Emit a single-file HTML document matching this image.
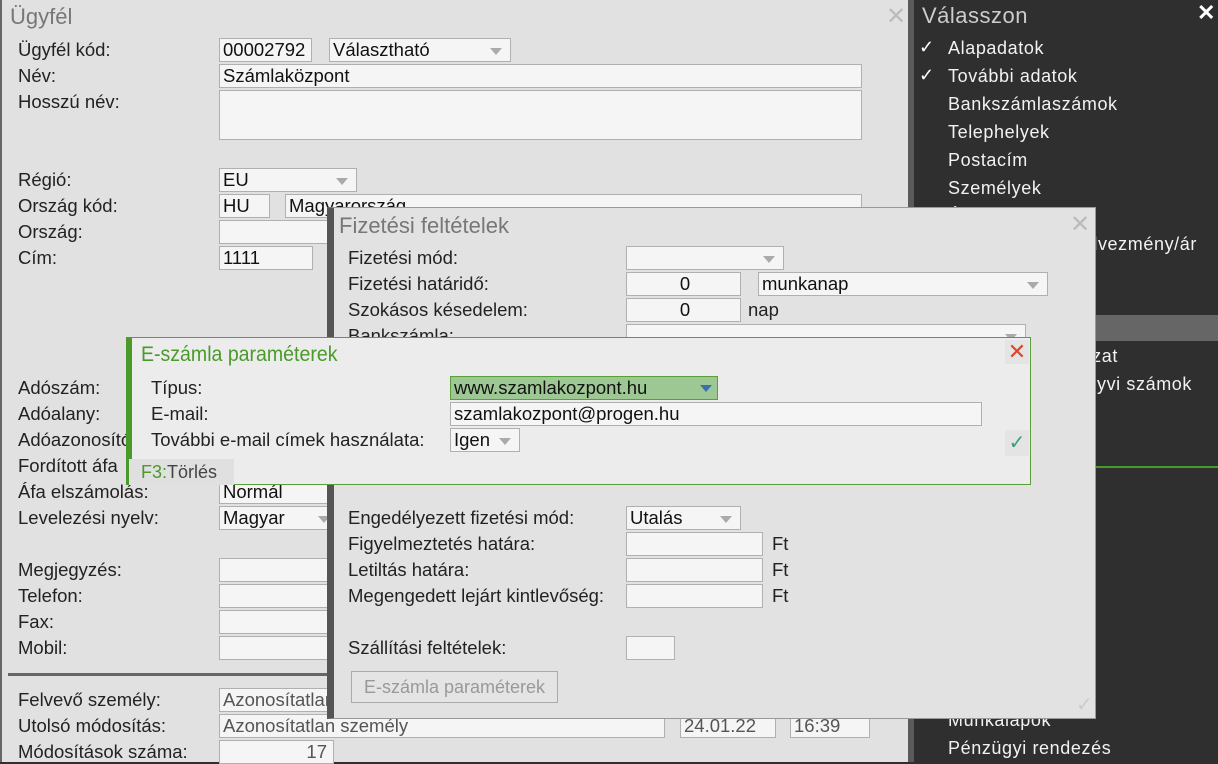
<!DOCTYPE html>
<html><head><meta charset="utf-8"><style>
*{box-sizing:border-box;margin:0;padding:0}
body{width:1218px;height:762px;overflow:hidden;background:#2f2f2f;font-family:"Liberation Sans",sans-serif;position:relative}
.a{position:absolute;white-space:nowrap}
#main{position:absolute;left:0;top:0;width:908px;height:762px;background:#e1e1e1;border-left:2px solid #666}
.l{position:absolute;font-size:18.5px;color:#222;line-height:20px;white-space:nowrap}
.i{position:absolute;height:24px;background:#f5f5f5;border:1px solid #b0b0b0;font-size:18.5px;line-height:22px;padding-left:3px;color:#111;white-space:nowrap;overflow:hidden}
.dd::after{content:"";position:absolute;right:8px;top:9px;border-left:6px solid transparent;border-right:6px solid transparent;border-top:7px solid #aaa}
.m{position:absolute;left:34px;font-size:18px;color:#f2f2f2;letter-spacing:.6px;line-height:22px;white-space:nowrap}
.mr{position:absolute;font-size:18px;color:#f2f2f2;letter-spacing:.6px;line-height:22px;white-space:nowrap;text-align:right}
</style></head><body>
<div id="main">
<div class="a" style="left:8px;top:4px;font-size:22px;color:#777">Ügyfél</div>
<div class="a" style="left:884px;top:2px;font-size:24px;color:#bbb">✕</div>
<div class="l" style="left:16px;top:40px">Ügyfél kód:</div>
<div class="l" style="left:16px;top:66px">Név:</div>
<div class="l" style="left:16px;top:92px">Hosszú név:</div>
<div class="l" style="left:16px;top:170px">Régió:</div>
<div class="l" style="left:16px;top:196px">Ország kód:</div>
<div class="l" style="left:16px;top:222px">Ország:</div>
<div class="l" style="left:16px;top:248px">Cím:</div>
<div class="l" style="left:16px;top:378px">Adószám:</div>
<div class="l" style="left:16px;top:404px">Adóalany:</div>
<div class="l" style="left:16px;top:430px">Adóazonosító</div>
<div class="l" style="left:16px;top:456px">Fordított áfa</div>
<div class="l" style="left:16px;top:482px">Áfa elszámolás:</div>
<div class="l" style="left:16px;top:508px">Levelezési nyelv:</div>
<div class="l" style="left:16px;top:560px">Megjegyzés:</div>
<div class="l" style="left:16px;top:586px">Telefon:</div>
<div class="l" style="left:16px;top:612px">Fax:</div>
<div class="l" style="left:16px;top:638px">Mobil:</div>
<div class="a" style="left:6px;top:673px;width:900px;height:3px;background:#666"></div>
<div class="l" style="left:16px;top:690px">Felvevő személy:</div>
<div class="l" style="left:16px;top:716px">Utolsó módosítás:</div>
<div class="l" style="left:16px;top:742px">Módosítások száma:</div>
<div class="i" style="left:217px;top:38px;width:93px">00002792</div>
<div class="i dd" style="left:327px;top:38px;width:182px">Választható</div>
<div class="i" style="left:217px;top:64px;width:643px">Számlaközpont</div>
<div class="i" style="left:217px;top:90px;width:643px;height:50px"></div>
<div class="i dd" style="left:217px;top:168px;width:138px">EU</div>
<div class="i" style="left:217px;top:194px;width:51px">HU</div>
<div class="i" style="left:283px;top:194px;width:577px">Magyarország</div>
<div class="i" style="left:217px;top:220px;width:200px"></div>
<div class="i" style="left:217px;top:246px;width:94px">1111</div>
<div class="i" style="left:217px;top:480px;width:120px">Normál</div>
<div class="i dd" style="left:217px;top:506px;width:120px">Magyar</div>
<div class="i" style="left:217px;top:558px;width:120px"></div>
<div class="i" style="left:217px;top:584px;width:120px"></div>
<div class="i" style="left:217px;top:610px;width:120px"></div>
<div class="i" style="left:217px;top:636px;width:120px"></div>
<div class="i" style="left:217px;top:688px;width:200px;color:#555">Azonosítatlan</div>
<div class="i" style="left:217px;top:714px;width:446px;color:#555">Azonosítatlan személy</div>
<div class="i" style="left:678px;top:714px;width:96px;color:#555">24.01.22</div>
<div class="i" style="left:788px;top:714px;width:80px;color:#555">16:39</div>
<div class="i" style="left:217px;top:740px;width:115px;text-align:right;padding-right:6px;color:#555">17</div>
</div>
<div class="a" style="left:908px;top:0;width:6px;height:762px;background:#5a5a5a"></div>
<!-- right panel -->
<div class="a" style="left:914px;top:0;width:304px;height:762px;background:#2f2f2f">
<div class="a" style="left:8px;top:3px;font-size:22px;color:#ccc;letter-spacing:.5px">Válasszon</div>
<div class="a" style="left:283px;top:0px;font-size:22px;color:#fff;font-weight:bold">✕</div>
<div class="a" style="left:0;top:315px;width:304px;height:26px;background:#666"></div>
<div class="a" style="left:5px;top:37px;font-size:18px;color:#fff">✓</div>
<div class="a" style="left:5px;top:65px;font-size:18px;color:#fff">✓</div>
<div class="m" style="top:37px">Alapadatok</div>
<div class="m" style="top:65px">További adatok</div>
<div class="m" style="top:93px">Bankszámlaszámok</div>
<div class="m" style="top:121px">Telephelyek</div>
<div class="m" style="top:149px">Postacím</div>
<div class="m" style="top:177px">Személyek</div>
<div class="m" style="top:205px">Árak</div>
<div class="mr" style="right:21px;top:233px">Mennyiségi kedvezmény/ár</div>
<div class="mr" style="right:100px;top:345px">Árengedmény/zat</div>
<div class="mr" style="right:26px;top:373px">Főkönyvi számok</div>
<div class="a" style="left:180px;top:466px;width:124px;height:2px;background:#4a9a2a"></div>
<div class="m" style="top:709px">Munkalapok</div>
<div class="m" style="top:737px">Pénzügyi rendezés</div>
</div>
<!-- Fizetési -->
<div class="a" style="left:327px;top:207px;width:769px;height:512px;background:#e2e2e2;border:1px solid #999;border-left:7px solid #555">
<div class="a" style="left:5px;top:5px;font-size:22px;color:#777">Fizetési feltételek</div>
<div class="a" style="left:736px;top:2px;font-size:24px;color:#bbb">✕</div>
<div class="a" style="left:742px;top:484px;font-size:20px;color:#ccc">✓</div>
</div>
<div class="l" style="left:348px;top:248px">Fizetési mód:</div>
<div class="l" style="left:348px;top:274px">Fizetési határidő:</div>
<div class="l" style="left:348px;top:300px">Szokásos késedelem:</div>
<div class="l" style="left:348px;top:326px">Bankszámla:</div>
<div class="i dd" style="left:626px;top:246px;width:158px"></div>
<div class="i" style="left:626px;top:272px;width:115px;text-align:center">0</div>
<div class="i dd" style="left:758px;top:272px;width:290px">munkanap</div>
<div class="i" style="left:626px;top:298px;width:115px;text-align:center">0</div>
<div class="l" style="left:748px;top:300px">nap</div>
<div class="i dd" style="left:626px;top:324px;width:400px"></div>
<div class="l" style="left:348px;top:508px">Engedélyezett fizetési mód:</div>
<div class="l" style="left:348px;top:534px">Figyelmeztetés határa:</div>
<div class="l" style="left:348px;top:560px">Letiltás határa:</div>
<div class="l" style="left:348px;top:586px">Megengedett lejárt kintlevőség:</div>
<div class="l" style="left:348px;top:638px">Szállítási feltételek:</div>
<div class="i dd" style="left:626px;top:506px;width:115px">Utalás</div>
<div class="i" style="left:626px;top:532px;width:137px"></div>
<div class="i" style="left:626px;top:558px;width:137px"></div>
<div class="i" style="left:626px;top:584px;width:137px"></div>
<div class="l" style="left:772px;top:534px">Ft</div>
<div class="l" style="left:772px;top:560px">Ft</div>
<div class="l" style="left:772px;top:586px">Ft</div>
<div class="i" style="left:626px;top:636px;width:49px"></div>
<div class="a" style="left:351px;top:671px;width:207px;height:32px;border:1px solid #aaa;background:#e4e4e4;font-size:18px;color:#999;text-align:center;line-height:30px">E-számla paraméterek</div>
<!-- E-számla -->
<div class="a" style="left:126px;top:337px;width:905px;height:148px;background:#ececec;border:1px solid #5a9e3a;border-left:6px solid #4a9a2a">
<div class="a" style="left:9px;top:5px;font-size:21px;color:#4a9a2a;transform:scaleX(.93);transform-origin:left">E-számla paraméterek</div>
<div class="a" style="left:873px;top:2px;width:24px;height:24px;background:#e4e4e4;color:#d9472b;font-size:22px;text-align:center;line-height:24px">✕</div>
<div class="a" style="left:873px;top:92px;width:24px;height:26px;background:#e4e4e4;color:#3aa07a;font-size:20px;text-align:center;line-height:26px">✓</div>
<div class="a" style="left:-3px;top:121px;width:105px;height:26px;background:#e0e0e0;font-size:18px;line-height:26px;padding-left:12px;color:#444"><span style="color:#4a9a2a">F3:</span>Törlés</div>
</div>
<div class="l" style="left:151px;top:378px">Típus:</div>
<div class="l" style="left:151px;top:404px">E-mail:</div>
<div class="l" style="left:151px;top:430px">További e-mail címek használata:</div>
<div class="i" style="left:450px;top:376px;width:268px;background:#9ec893;border-color:#5a9e3a">www.szamlakozpont.hu</div>
<div class="a" style="left:700px;top:385px;border-left:6px solid transparent;border-right:6px solid transparent;border-top:7px solid #3a6fb0"></div>
<div class="i" style="left:450px;top:402px;width:532px">szamlakozpont@progen.hu</div>
<div class="i dd" style="left:450px;top:428px;width:70px">Igen</div>
</body></html>
